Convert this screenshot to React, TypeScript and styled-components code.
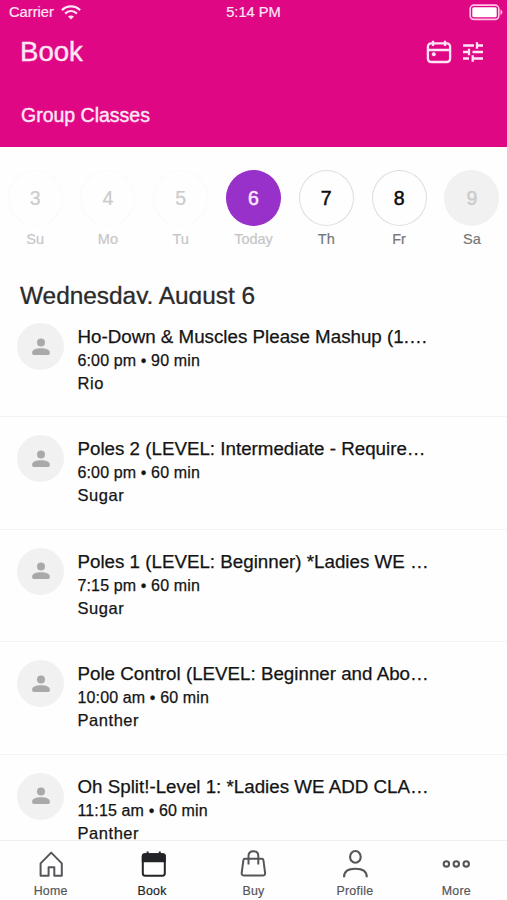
import React from "react";
import styled, { createGlobalStyle } from "styled-components";

const Global = createGlobalStyle`
  * { box-sizing: border-box; }
  html, body { margin: 0; background: #fefefe; }
  body { font-family: "Liberation Sans", Arial, sans-serif; color: #141414; }
`;

const Screen = styled.div`
  width: 507px;
  height: 900px;
  display: flex;
  flex-direction: column;
  overflow: hidden;
  background: #fefefe;
`;

const Header = styled.header`
  flex: none;
  height: 147px;
  background: #df0784;
  color: #ffe6f6;
  display: flex;
  flex-direction: column;
`;

const StatusBar = styled.div`
  height: 24px;
  display: grid;
  grid-template-columns: 1fr auto 1fr;
  align-items: center;
  padding: 0 4px;
  font-size: 14.7px;
  line-height: 24px;
  -webkit-text-stroke: 0.2px currentColor;
`;

const Carrier = styled.div`
  display: flex;
  align-items: center;
  gap: 7px;
  padding-left: 5px;
`;

const BatterySlot = styled.div`
  display: flex;
  justify-content: flex-end;
`;

const TitleBar = styled.div`
  height: 56px;
  display: flex;
  align-items: center;
  justify-content: space-between;
  padding: 0 24px 0 20px;
`;

const PageTitle = styled.h1`
  margin: 0;
  font-size: 27.6px;
  line-height: 32px;
  font-weight: 400;
  -webkit-text-stroke: 0.4px currentColor;
`;

const Actions = styled.div`
  display: flex;
  align-items: center;
  gap: 11px;
`;

const Tab = styled.div`
  padding: 23px 0 0 21px;
  font-size: 19.5px;
  line-height: 24px;
  -webkit-text-stroke: 0.4px currentColor;
`;

const Week = styled.div`
  flex: none;
  display: grid;
  grid-template-columns: repeat(7, 72.8px);
  justify-content: center;
  padding-top: 23px;
  height: 135px;
`;

type Kind = "past" | "today" | "open" | "off";

const Day = styled.div`
  display: flex;
  flex-direction: column;
  align-items: center;
`;

const circleFill: Record<Kind, string> = { past: "#fefefe", today: "#9831c9", open: "#fefefe", off: "#f1f1f1" };
const circleEdge: Record<Kind, string> = { past: "#fafafa", today: "#9831c9", open: "#dedede", off: "#f1f1f1" };
const circleText: Record<Kind, string> = { past: "#cbcbcb", today: "#fbeaff", open: "#0c0c0c", off: "#cccccc" };

const Circle = styled.div<{ $kind: Kind }>`
  width: 55px;
  height: 56px;
  border-radius: 50%;
  display: flex;
  align-items: center;
  justify-content: center;
  font-size: 19.5px;
  background: ${(p) => circleFill[p.$kind]};
  border: 1px solid ${(p) => circleEdge[p.$kind]};
  color: ${(p) => circleText[p.$kind]};
  -webkit-text-stroke: ${(p) => (p.$kind === "past" ? "0.2px" : "0.5px")} currentColor;
`;

const DayName = styled.div<{ $dim: boolean }>`
  margin-top: 4px;
  font-size: 14.5px;
  line-height: 18px;
  color: ${(p) => (p.$dim ? "#c6c6c6" : "#777777")};
  -webkit-text-stroke: 0.2px currentColor;
`;

const DateHeading = styled.h2`
  flex: none;
  margin: 0 0 1px;
  height: 22px;
  padding-left: 20px;
  overflow: hidden;
  font-size: 24.4px;
  line-height: 28px;
  font-weight: 400;
  color: #2b2b2b;
  -webkit-text-stroke: 0.3px currentColor;
`;

const List = styled.main`
  flex: 1;
  min-height: 0;
  overflow: hidden;
`;

const Row = styled.article`
  height: 112.4px;
  display: flex;
  gap: 13.5px;
  padding: 18px 0 0 17px;
  border-bottom: 1px solid #f3f3f3;
`;

const Avatar = styled.div`
  flex: none;
  width: 47px;
  height: 47px;
  border-radius: 50%;
  background: #f1f1f1;
  display: flex;
  align-items: center;
  justify-content: center;
`;

const Details = styled.div`
  display: flex;
  flex-direction: column;
  padding-top: 1px;
  -webkit-text-stroke: 0.25px currentColor;
`;

const ClassName = styled.div`
  font-size: 18.75px;
  line-height: 26px;
  white-space: nowrap;
`;

const Time = styled.div`
  font-size: 16px;
  line-height: 22px;
  letter-spacing: 0.13px;
`;

const Teacher = styled.div`
  font-size: 16.5px;
  line-height: 22px;
  letter-spacing: 0.55px;
`;

const Nav = styled.nav`
  flex: none;
  height: 60px;
  display: grid;
  grid-template-columns: repeat(5, 1fr);
  border-top: 1px solid #efefef;
  background: #fefefe;
`;

const NavItem = styled.div<{ $active: boolean }>`
  display: flex;
  flex-direction: column;
  align-items: center;
  padding-top: 8px;
  font-size: 12.4px;
  line-height: 16px;
  letter-spacing: 0.25px;
  color: ${(p) => (p.$active ? "#222326" : "#55565a")};
  -webkit-text-stroke: 0.2px currentColor;

  svg { margin-bottom: 4px; }
`;

const Wifi = () => (
  <svg width="20" height="15" viewBox="0 0 20 15" fill="none" stroke="currentColor" strokeWidth="2.2">
    <path d="M0.9 5.1C6 .1 14 .1 19.1 5.1M4.1 8.6C7.6 5.4 12.4 5.4 15.9 8.6" />
    <path d="M7 11.6C8.8 10 11.2 10 13 11.6L10 14.6Z" fill="currentColor" stroke="none" />
  </svg>
);

const Battery = () => (
  <svg width="34" height="17" viewBox="0 0 34 17" fill="none">
    <rect x="1.2" y="1.2" width="28.6" height="14.2" rx="3.6" stroke="#ffc4e6" strokeWidth="1.7" />
    <rect x="3.3" y="3.3" width="24.4" height="10" rx="1.5" fill="#fff" />
    <path d="M31.5 5.5Q33.3 6.2 33.3 8.3T31.5 11.1Z" fill="#ffc4e6" />
  </svg>
);

const CalendarIcon = () => (
  <svg width="26" height="24" viewBox="0 0 26 24" fill="none" stroke="currentColor" strokeWidth="2.3">
    <rect x="1.9" y="3.4" width="22.2" height="18.6" rx="3.2" />
    <path d="M1.9 10H24.1M7 .8V6M19 .8V6" />
    <circle cx="7.8" cy="14.2" r="2" fill="currentColor" stroke="none" />
  </svg>
);

const TuneIcon = () => (
  <svg width="20" height="20" viewBox="0 0 20 20" fill="none" stroke="currentColor" strokeWidth="2.3">
    <path d="M0 3.5H11M14 3.5H20M14 .3V6.7M0 10H6M6 6.8V13.2M9.5 10H20M0 16.5H6M9.7 16.5H20M9.7 13.3V19.7" />
  </svg>
);

const PersonIcon = () => (
  <svg width="18" height="18" viewBox="0 0 18 18" fill="#a9a9a9">
    <circle cx="9" cy="4.4" r="4" />
    <path d="M0.2 15.6V14.4C0.2 11.2 4.5 10.2 9 10.2S17.8 11.2 17.8 14.4V15.6Q17.8 17 16.4 17H1.6Q.2 17 .2 15.6Z" />
  </svg>
);

const HomeIcon = () => (
  <svg width="28" height="30" viewBox="0 0 28 30" fill="none" stroke="currentColor" strokeWidth="2">
    <path d="M3.6 14.4L14.2 3.6L24.8 14.4V26.7H17.3V18.2H11.6V26.7H3.6Z" strokeLinejoin="round" />
  </svg>
);

const BookIcon = () => (
  <svg width="28" height="30" viewBox="0 0 28 30" fill="none" stroke="currentColor" strokeWidth="2">
    <rect x="4.8" y="5.2" width="22" height="21.6" rx="2.6" />
    <path d="M3.8 13.2V7Q3.8 4.3 6.6 4.3H25Q27.8 4.3 27.8 7V13.2Z" fill="currentColor" stroke="none" />
    <path d="M9.6 2.6V6M21.8 2.6V6" />
  </svg>
);

const BuyIcon = () => (
  <svg width="28" height="30" viewBox="0 0 28 30" fill="none" stroke="currentColor" strokeWidth="2">
    <path d="M5.8 9.8H23Q24.2 9.8 24.4 11.1L26.1 23.8Q26.4 26.6 23.7 26.6H5.1Q2.4 26.6 2.7 23.8L4.4 11.1Q4.6 9.8 5.8 9.8Z" />
    <path d="M9.5 15.6V7.1Q9.5 2.3 14.4 2.3T19.3 7.1V15.6" />
  </svg>
);

const ProfileIcon = () => (
  <svg width="28" height="30" viewBox="0 0 28 30" fill="none" stroke="currentColor" strokeWidth="2.1">
    <ellipse cx="14.4" cy="7.9" rx="5.3" ry="5.9" />
    <path d="M3 28.2C3 22 7.4 19.8 14.4 19.8S25.8 22 25.8 28.2" />
  </svg>
);

const MoreIcon = () => (
  <svg width="28" height="30" viewBox="0 0 28 30" fill="none" stroke="currentColor" strokeWidth="2.1">
    <circle cx="4.4" cy="14.9" r="2.7" />
    <circle cx="14.3" cy="14.9" r="2.7" />
    <circle cx="24.2" cy="14.9" r="2.7" />
  </svg>
);

const days: { num: number; name: string; kind: Kind }[] = [
  { num: 3, name: "Su", kind: "past" },
  { num: 4, name: "Mo", kind: "past" },
  { num: 5, name: "Tu", kind: "past" },
  { num: 6, name: "Today", kind: "today" },
  { num: 7, name: "Th", kind: "open" },
  { num: 8, name: "Fr", kind: "open" },
  { num: 9, name: "Sa", kind: "off" },
];

const classes = [
  { name: "Ho-Down & Muscles Please Mashup (1.…", time: "6:00 pm • 90 min", teacher: "Rio" },
  { name: "Poles 2 (LEVEL: Intermediate - Require…", time: "6:00 pm • 60 min", teacher: "Sugar" },
  { name: "Poles 1 (LEVEL: Beginner) *Ladies WE …", time: "7:15 pm • 60 min", teacher: "Sugar" },
  { name: "Pole Control (LEVEL: Beginner and Abo…", time: "10:00 am • 60 min", teacher: "Panther" },
  { name: "Oh Split!-Level 1: *Ladies WE ADD CLA…", time: "11:15 am • 60 min", teacher: "Panther" },
];

const navItems = [
  { label: "Home", Icon: HomeIcon },
  { label: "Book", Icon: BookIcon },
  { label: "Buy", Icon: BuyIcon },
  { label: "Profile", Icon: ProfileIcon },
  { label: "More", Icon: MoreIcon },
];

export default function App() {
  return (
    <>
      <Global />
      <Screen>
        <Header>
          <StatusBar>
            <Carrier>Carrier <Wifi /></Carrier>
            <span>5:14 PM</span>
            <BatterySlot><Battery /></BatterySlot>
          </StatusBar>
          <TitleBar>
            <PageTitle>Book</PageTitle>
            <Actions><CalendarIcon /><TuneIcon /></Actions>
          </TitleBar>
          <Tab>Group Classes</Tab>
        </Header>
        <Week>
          {days.map((d) => (
            <Day key={d.num}>
              <Circle $kind={d.kind}>{d.num}</Circle>
              <DayName $dim={d.kind === "past" || d.kind === "today"}>{d.name}</DayName>
            </Day>
          ))}
        </Week>
        <DateHeading>Wednesday, August 6</DateHeading>
        <List>
          {classes.map((c) => (
            <Row key={c.name}>
              <Avatar><PersonIcon /></Avatar>
              <Details>
                <ClassName>{c.name}</ClassName>
                <Time>{c.time}</Time>
                <Teacher>{c.teacher}</Teacher>
              </Details>
            </Row>
          ))}
        </List>
        <Nav>
          {navItems.map(({ label, Icon }) => (
            <NavItem key={label} $active={label === "Book"}>
              <Icon />
              {label}
            </NavItem>
          ))}
        </Nav>
      </Screen>
    </>
  );
}
